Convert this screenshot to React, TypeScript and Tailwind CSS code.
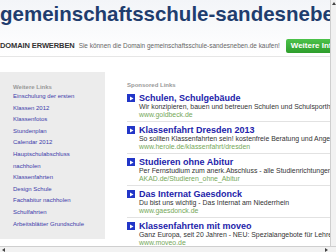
import React from 'react';

const links = [
  'Einschulung der ersten',
  'Klassen 2012',
  'Klassenfotos',
  'Stundenplan',
  'Calendar 2012',
  'Hauptschulabschluss',
  'nachholen',
  'Klassenfahrten',
  'Design Schule',
  'Fachabitur nachholen',
  'Schulfahrten',
  'Arbeitsblätter Grundschule',
];

const ads = [
  {
    title: 'Schulen, Schulgebäude',
    text: 'Wir konzipieren, bauen und betreuen Schulen und Schulsporthallen',
    url: 'www.goldbeck.de',
  },
  {
    title: 'Klassenfahrt Dresden 2013',
    text: 'So sollten Klassenfahrten sein! kostenfreie Beratung und Angebote',
    url: 'www.herole.de/klassenfahrt/dresden',
  },
  {
    title: 'Studieren ohne Abitur',
    text: 'Per Fernstudium zum anerk.Abschluss - alle Studienrichtungen',
    url: 'AKAD.de/Studieren_ohne_Abitur',
  },
  {
    title: 'Das Internat Gaesdonck',
    text: 'Du bist uns wichtig - Das Internat am Niederrhein',
    url: 'www.gaesdonck.de',
  },
  {
    title: 'Klassenfahrten mit moveo',
    text: 'Ganz Europa, seit 20 Jahren - NEU: Spezialangebote für Lehrer',
    url: 'www.moveo.de',
  },
];

function AdIcon() {
  return (
    <div className="w-[8px] h-[8px] shrink-0 bg-[#2236c8] flex items-center justify-center">
      <svg width="5" height="5" viewBox="0 0 10 10">
        <path d="M2 1 L9 5 L2 9 Z" fill="#fff" />
      </svg>
    </div>
  );
}

export default function App() {
  return (
    <div className="w-[336px] h-[252px] flex flex-col overflow-hidden bg-white font-['Liberation_Sans',Arial,sans-serif]">
      <div className="flex flex-1 min-h-0">
        <div className="flex-1 min-w-0 overflow-hidden">
          {/* Header */}
          <div className="h-[57px] border-b border-[#e6e6e6] bg-gradient-to-b from-[#f3f5f8] to-white">
            <div className="pt-[3px] text-[20.5px] leading-[22px] font-bold text-[#1f3d6e] whitespace-nowrap">
              gemeinschaftsschule-sandesneben
            </div>
            <div className="mt-[14px] flex items-center whitespace-nowrap">
              <span className="text-[7.5px] font-bold text-[#333] tracking-[-0.1px]">DOMAIN ERWERBEN</span>
              <span className="ml-[4px] text-[6.45px] text-[#666]">
                Sie können die Domain gemeinschaftsschule-sandesneben.de kaufen!
              </span>
              <span className="ml-[6px] h-[14px] px-[5px] rounded-[2px] bg-gradient-to-b from-[#4cc24a] to-[#2e9e2c] text-white text-[8px] font-bold flex items-center">
                Weitere Infos
              </span>
            </div>
          </div>

          <div className="flex mt-[15px]">
            {/* Sidebar */}
            <div className="w-[105px] h-[167px] shrink-0 bg-[#ececec] pt-[10px] pl-[13px]">
              <div className="text-[6px] leading-[10px] font-bold text-[#999]">Weitere Links</div>
              <div className="mt-[-1px]">
                {links.map((l) => (
                  <div key={l} className="text-[6px] leading-[11.6px] text-[#3c3cab] whitespace-nowrap">
                    {l}
                  </div>
                ))}
              </div>
            </div>

            {/* Sponsored */}
            <div className="flex-1 min-w-0 ml-[10px] pl-[12px] pt-[9px]">
              <div className="text-[6px] leading-[9px] font-bold text-[#999]">Sponsored Links</div>
              {ads.map((a) => (
                <div key={a.title} className="pt-[3px] pb-[2.5px] border-b border-[#e2e2e2]">
                  <div className="flex items-center gap-[4px] h-[10px]">
                    <AdIcon />
                    <span className="text-[9px] leading-[10px] font-bold text-[#2323aa] whitespace-nowrap">
                      {a.title}
                    </span>
                  </div>
                  <div className="pl-[12px] text-[6.9px] leading-[8px] text-[#333] whitespace-nowrap">{a.text}</div>
                  <div className="pl-[12px] text-[6.9px] leading-[7.5px] text-[#76a85a] whitespace-nowrap">{a.url}</div>
                </div>
              ))}
            </div>
          </div>
        </div>

        {/* Vertical scrollbar */}
        <div className="w-[6px] shrink-0 border-l border-[#cfcfcf] bg-[#f2f2f2] flex flex-col items-center pt-[2px]">
          <svg width="4" height="3" viewBox="0 0 4 3">
            <path d="M2 0 L4 3 L0 3 Z" fill="#444" />
          </svg>
        </div>
      </div>

      {/* Horizontal scrollbar */}
      <div className="h-[6px] shrink-0 border-t border-[#cfcfcf] bg-[#f2f2f2] flex items-center">
        <svg className="ml-[2px]" width="3" height="4" viewBox="0 0 3 4">
          <path d="M0 2 L3 0 L3 4 Z" fill="#444" />
        </svg>
        <div className="flex-1" />
        <svg className="mr-[8px]" width="3" height="4" viewBox="0 0 3 4">
          <path d="M3 2 L0 0 L0 4 Z" fill="#444" />
        </svg>
      </div>
    </div>
  );
}
